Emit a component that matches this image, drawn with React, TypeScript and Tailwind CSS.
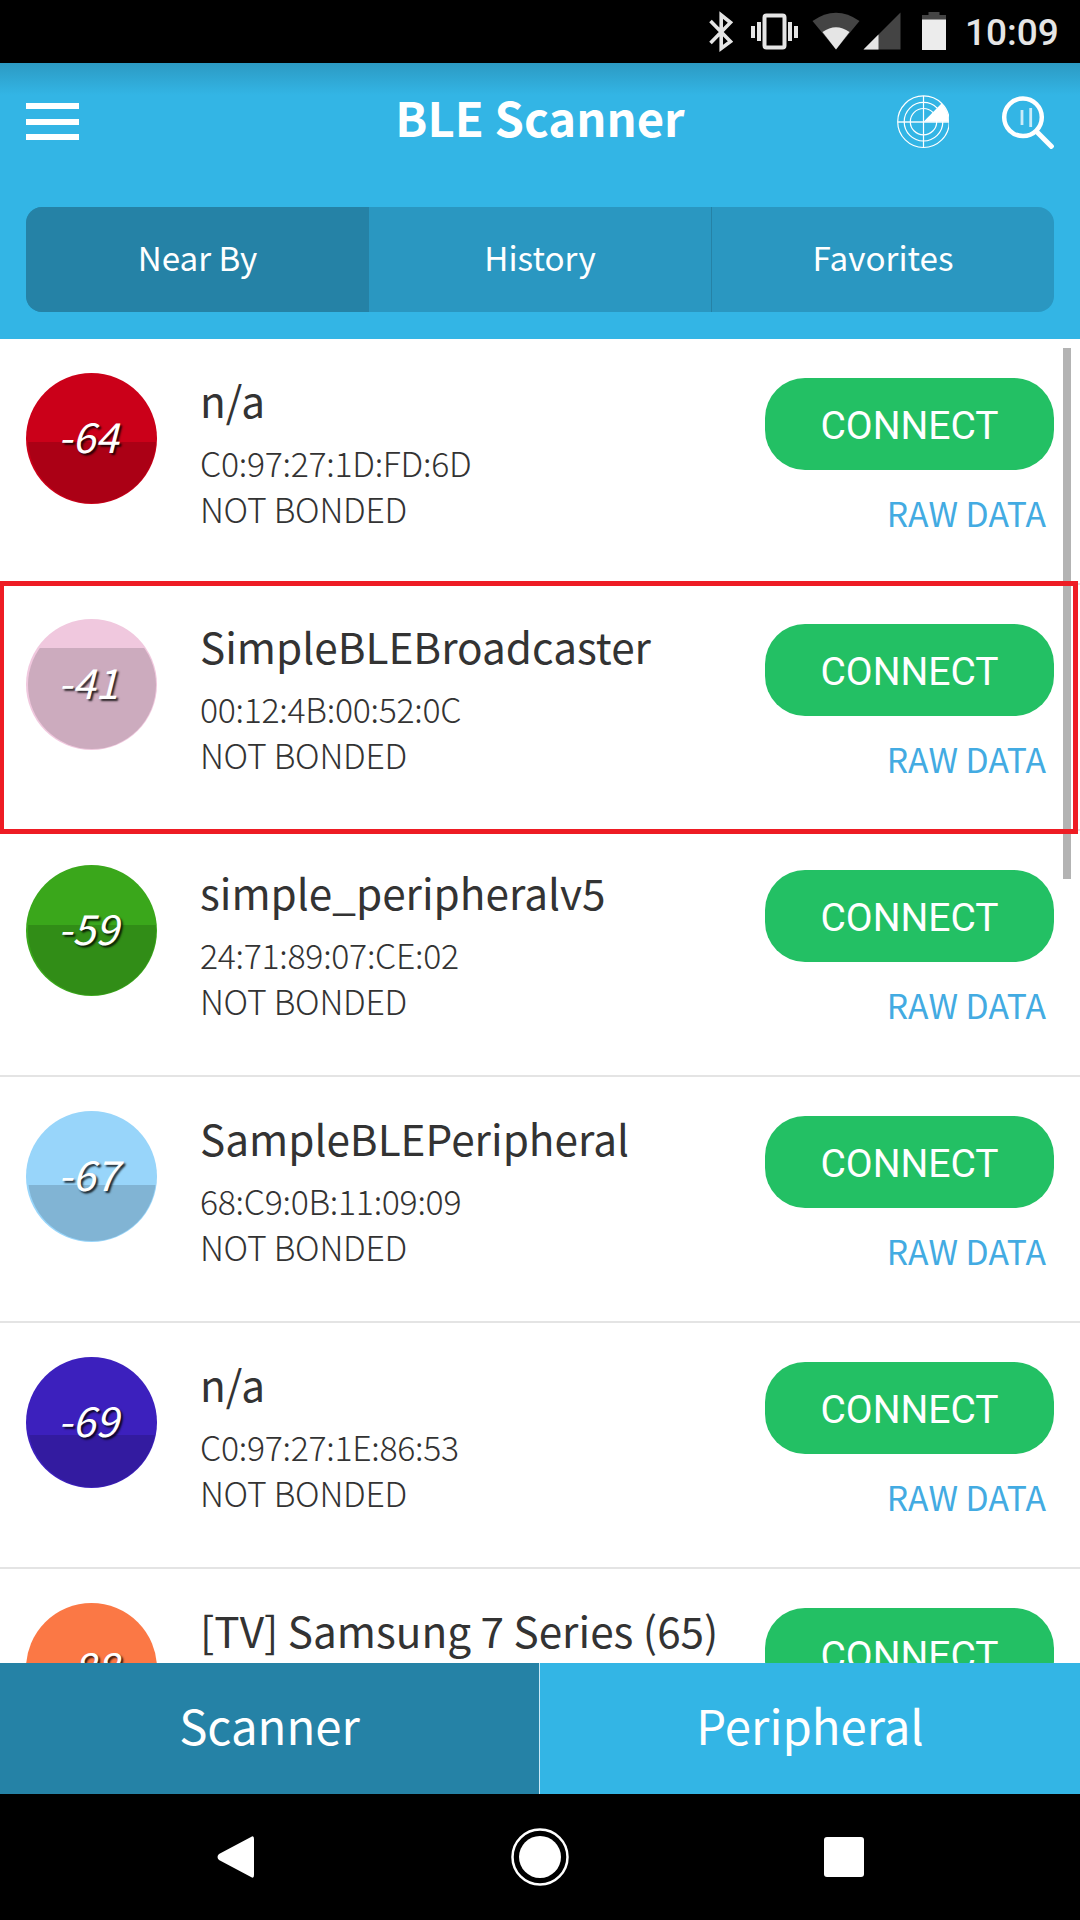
type Device = {
  rssi: string;
  name: string;
  address?: string;
  color: string;
  fill: string;
  level: string;
  selected?: boolean;
};

const devices: Device[] = [
  { rssi: "-64", name: "n/a", address: "C0:97:27:1D:FD:6D", color: "bg-[#cb0019]", fill: "bg-[#ab0015]", level: "top-[69px]" },
  { rssi: "-41", name: "SimpleBLEBroadcaster", address: "00:12:4B:00:52:0C", color: "bg-[#f0c8de]", fill: "bg-[#ccabbe]", level: "top-[29px]", selected: true },
  { rssi: "-59", name: "simple_peripheralv5", address: "24:71:89:07:CE:02", color: "bg-[#3aa71b]", fill: "bg-[#318d17]", level: "top-[60px]" },
  { rssi: "-67", name: "SampleBLEPeripheral", address: "68:C9:0B:11:09:09", color: "bg-[#98d5fa]", fill: "bg-[#81b4d4]", level: "top-[74px]" },
  { rssi: "-69", name: "n/a", address: "C0:97:27:1E:86:53", color: "bg-[#3c20bd]", fill: "bg-[#331ba0]", level: "top-[78px]" },
  { rssi: "-88", name: "[TV] Samsung 7 Series (65)", color: "bg-[#fb7845]", fill: "bg-[#d5663b]", level: "top-[110px]" },
];

function StatusBar() {
  return (
    <div className="flex h-[63px] shrink-0 items-start bg-black font-[Roboto,sans-serif] text-[#e5e5e5]">
      <svg className="ml-[700px] h-[63px] w-[256px] shrink-0" viewBox="700 0 256 63">
        <path d="M710.500 21l20 20.500-9.300 7V15l9.300 7.500-20 20.500" fill="none" stroke="#e5e5e5" strokeWidth="3.600" />
        <rect x="764.500" y="15.500" width="20" height="32" rx="2" fill="none" stroke="#e5e5e5" strokeWidth="4" />
        <path d="M751 26h4v12h-4zM757 22h4v19h-4zM788 22h4v19h-4zM794 26h4v12h-4z" fill="#e5e5e5" />
        <path d="M812.500 21Q836 4.500 859.500 21L836 49.500z" fill="#444" />
        <path d="M822.500 32Q836 22.500 849.500 32L836 49.500z" fill="#e5e5e5" />
        <path d="M900.500 12.500V49.500H863.500z" fill="#444" />
        <path d="M878.500 34.500V49.500H863.500z" fill="#e5e5e5" />
        <path d="M922 20v-5h6.500v-3h11v3h6.500v5z" fill="#444" />
        <path d="M922 19.500h24v30.500h-24z" fill="#ececec" />
      </svg>
      <span className="ml-[9px] mt-[7px] text-[37px] leading-[52px] font-medium">10:09</span>
    </div>
  );
}

function Header() {
  return (
    <div className="h-[276px] shrink-0 bg-[#33b5e5] bg-[linear-gradient(#2c9ac3,#33b5e500_32px)] px-[26px] text-white">
      <div className="flex h-[144px] items-start justify-between">
        <div className="mt-[40px] flex w-[345px] flex-col gap-[9.500px]">
          <div className="h-[6px] w-[53px] bg-white" />
          <div className="h-[6px] w-[53px] bg-white" />
          <div className="h-[6px] w-[53px] bg-white" />
        </div>
        <h1 className="mt-[19px] text-[47.200px] leading-[70px] font-bold">BLE Scanner</h1>
        <div className="flex w-[345px] justify-end">
          <svg className="mt-[32px] h-[54px] w-[54px]" viewBox="0 0 54 54" fill="none" stroke="white">
            <circle cx="28.500" cy="26.700" r="25.800" strokeWidth="1.200" />
            <circle cx="28.500" cy="26.700" r="19.300" strokeWidth="1.200" />
            <circle cx="28.500" cy="26.700" r="13.200" strokeWidth="1.200" />
            <path d="M28.500 1v52" strokeWidth="1.200" />
            <path d="M3 27h51" strokeWidth="1.800" opacity=".7" />
            <path d="M28.500 26.700L46.500 8.500A26 26 0 0 1 54 26.700z" fill="white" stroke="none" />
          </svg>
          <svg className="ml-[51px] mt-[32px] h-[54px] w-[54px]" viewBox="0 0 54 54" fill="none" stroke="white">
            <circle cx="23" cy="22.300" r="18.800" strokeWidth="4.500" />
            <path d="M36.500 36.500L53 53" strokeWidth="5" />
            <path d="M22 15v15M30.700 13v19" strokeWidth="2.800" opacity=".75" />
          </svg>
        </div>
      </div>
      <div className="flex h-[105px] overflow-hidden rounded-[16px] bg-[#2a97c1] text-center text-[33.200px] leading-[100px]">
        <div className="w-[343px] bg-[#2582a6]">Near By</div>
        <div className="w-[343px] border-r border-[#2582a6]">History</div>
        <div className="flex-1">Favorites</div>
      </div>
    </div>
  );
}

function DeviceRow({ device }: { device: Device }) {
  return (
    <div className="relative flex h-[246px] shrink-0 border-b-2 border-[#e4e4e4] pl-[26px] pr-[26px] text-[#333]">
      <div className={`relative mt-[34px] h-[131px] w-[131px] shrink-0 overflow-hidden rounded-full ${device.color}`}>
        <div className="absolute inset-[1.500px] overflow-hidden rounded-full">
          <div className={`absolute inset-x-0 -bottom-px -mt-[1.500px] ${device.level} ${device.fill}`} />
        </div>
        <div className="relative pr-[7px] text-center text-[41.500px] leading-[125px] text-white italic [text-shadow:2px_2px_2px_#000c]">
          {device.rssi}
        </div>
      </div>
      <div className="ml-[43px] flex-1 whitespace-nowrap">
        <div className="mt-[31px] text-[42.300px] leading-[60px]">{device.name}</div>
        {device.address && (
          <div className="mt-[10px] text-[33.800px] leading-[46px] font-light tracking-[-0.280px]">
            <div>{device.address}</div>
            <div>NOT BONDED</div>
          </div>
        )}
      </div>
      <div className="flex w-[289px] flex-col items-end">
        <div className="mt-[39px] h-[92px] w-full rounded-[40px] bg-[#23c064] text-center font-[Roboto,sans-serif] text-[39px] leading-[97px] text-white">
          CONNECT
        </div>
        {device.address && <div className="mr-[8px] mt-[20px] text-[33.700px] leading-[46px] text-[#43abe2]">RAW DATA</div>}
      </div>
      {device.selected && (
        <div className="absolute -top-[4px] left-0 z-20 h-[253px] w-[1078px] border-[5px] border-l-4 border-[#ee1c24]" />
      )}
    </div>
  );
}

export default function App() {
  return (
    <div className="flex h-[1920px] w-[1080px] flex-col overflow-hidden bg-white font-['Noto_Sans_CJK_SC',sans-serif]">
      <StatusBar />
      <Header />
      <div className="relative flex h-[1324px] shrink-0 flex-col overflow-hidden">
        {devices.map((device) => (
          <DeviceRow key={device.rssi} device={device} />
        ))}
        <div className="absolute left-[1063px] top-[9px] z-10 h-[531px] w-[8px] bg-[#b3b3b3]" />
      </div>
      <div className="flex h-[131px] shrink-0 text-center text-[47.300px] leading-[124px] text-white">
        <div className="w-[540px] border-r border-[#c9e9f7] bg-[#2582a6]">Scanner</div>
        <div className="flex-1 bg-[#33b5e5]">Peripheral</div>
      </div>
      <div className="h-[126px] shrink-0 bg-black">
        <svg className="h-[126px] w-[1080px]" viewBox="0 1794 1080 126" fill="white">
          <path d="M251 1837q3-2 3 2v36q0 4-3 2l-32-17q-3-3 0-6z" />
          <circle cx="540" cy="1857" r="21" />
          <circle cx="540" cy="1857" r="27.500" fill="none" stroke="white" strokeWidth="2.500" />
          <rect x="824" y="1837" width="40" height="40" rx="3" />
        </svg>
      </div>
    </div>
  );
}
